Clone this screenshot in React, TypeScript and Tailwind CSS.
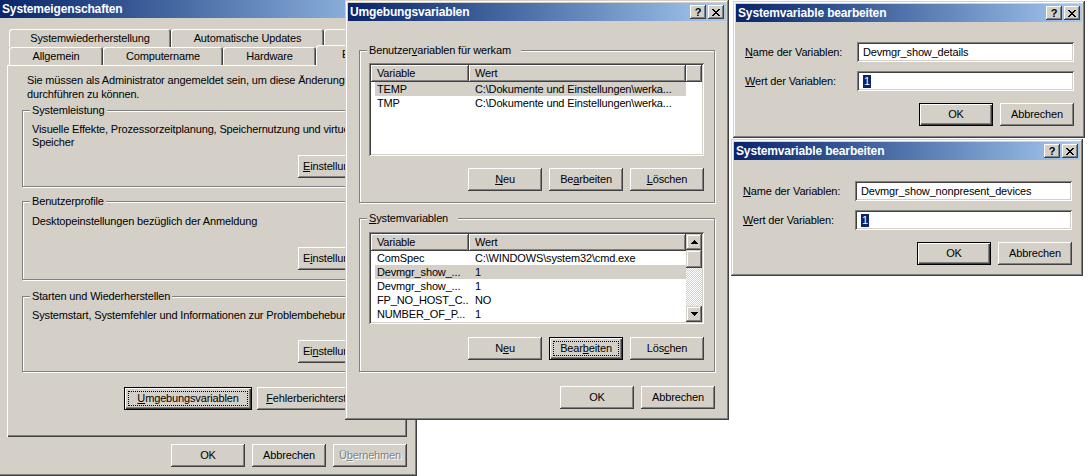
import React from 'react';

type Kids = { children?: React.ReactNode; className?: string };

function CaptionButtons() {
  return (
    <div className="flex items-center gap-[2px] pr-[2px]">
      <div className="w-[16px] h-[14px] bg-[#d4d0c8] flex items-center justify-center text-black font-bold text-[11px] leading-none shadow-[inset_-1px_-1px_#404040,inset_1px_1px_#ffffff,inset_-2px_-2px_#808080]">
        ?
      </div>
      <div className="w-[16px] h-[14px] bg-[#d4d0c8] flex items-center justify-center shadow-[inset_-1px_-1px_#404040,inset_1px_1px_#ffffff,inset_-2px_-2px_#808080]">
        <svg width="8" height="7" viewBox="0 0 8 7" shapeRendering="crispEdges">
          <path
            fill="#000"
            d="M0 0h2v1H0z M6 0h2v1H6z M1 1h2v1H1z M5 1h2v1H5z M2 2h4v1H2z M3 3h2v1H3z M2 4h4v1H2z M1 5h2v1H1z M5 5h2v1H5z M0 6h2v1H0z M6 6h2v1H6z"
          />
        </svg>
      </div>
    </div>
  );
}

function Win({ title, className = '', children }: Kids & { title: string }) {
  return (
    <div
      className={`absolute isolate flex flex-col bg-[#d4d0c8] p-[3px] shadow-[inset_-1px_-1px_#404040,inset_1px_1px_#d4d0c8,inset_-2px_-2px_#808080,inset_2px_2px_#ffffff] ${className}`}
    >
      <div className="h-[18px] shrink-0 flex items-center bg-linear-to-r from-[#0a246a] to-[#a6caf0] pl-[2px]">
        <span className="flex-1 overflow-hidden whitespace-nowrap text-white font-bold text-[12px] leading-[18px]">
          {title}
        </span>
        <CaptionButtons />
      </div>
      {children}
    </div>
  );
}

function Btn({
  children,
  className = '',
  def = false,
  focus = false,
  disabled = false,
}: Kids & { def?: boolean; focus?: boolean; disabled?: boolean }) {
  return (
    <div
      className={`relative h-[23px] shrink-0 flex items-center justify-center whitespace-nowrap overflow-hidden bg-[#d4d0c8] ${
        def
          ? 'shadow-[inset_0_0_0_1px_#000000,inset_2px_2px_#ffffff,inset_-2px_-2px_#404040,inset_-3px_-3px_#808080]'
          : 'shadow-[inset_-1px_-1px_#404040,inset_1px_1px_#ffffff,inset_-2px_-2px_#808080]'
      } ${disabled ? 'text-[#808080] [text-shadow:1px_1px_0_#ffffff]' : 'text-black'} ${className}`}
    >
      {children}
      {focus && <span className="absolute inset-[4px] border border-dotted border-black" />}
    </div>
  );
}

function Group({ label, className = '', children }: Kids & { label: React.ReactNode }) {
  return (
    <div className={`relative border border-[#808080] shadow-[inset_1px_1px_#ffffff,1px_1px_#ffffff] ${className}`}>
      <span className="absolute top-[-7px] left-[7px] px-[2px] bg-[#d4d0c8] leading-[13px] whitespace-nowrap">
        {label}
      </span>
      {children}
    </div>
  );
}

function Tab({ children, className = '' }: Kids) {
  return (
    <div
      className={`shrink-0 bg-[#d4d0c8] rounded-t-[3px] text-center leading-[18px] whitespace-nowrap overflow-hidden shadow-[inset_1px_1px_#ffffff,inset_-1px_0_#404040,inset_-2px_0_#808080] ${className}`}
    >
      {children}
    </div>
  );
}

const sunken =
  'shadow-[inset_1px_1px_#808080,inset_-1px_-1px_#ffffff,inset_2px_2px_#404040,inset_-2px_-2px_#d4d0c8]';

type Row = { name: string; value: string; sel?: boolean };

function Arrow({ down = false }: { down?: boolean }) {
  return (
    <svg width="7" height="4" viewBox="0 0 7 4" shapeRendering="crispEdges">
      <path
        fill="#000"
        d={
          down
            ? 'M0 0h7v1H0z M1 1h5v1H1z M2 2h3v1H2z M3 3h1v1H3z'
            : 'M3 0h1v1H3z M2 1h3v1H2z M1 2h5v1H1z M0 3h7v1H0z'
        }
      />
    </svg>
  );
}

const raisedBox =
  'bg-[#d4d0c8] shadow-[inset_-1px_-1px_#404040,inset_1px_1px_#d4d0c8,inset_-2px_-2px_#808080,inset_2px_2px_#ffffff]';

function ListView({ rows, scroll = false, className = '' }: { rows: Row[]; scroll?: boolean; className?: string }) {
  return (
    <div className={`flex bg-white p-[2px] ${sunken} ${className}`}>
      <div className="flex-1 flex flex-col overflow-hidden">
        <div className="flex h-[17px] shrink-0">
          <div className="w-[98px] shrink-0 pl-[6px] leading-[17px] bg-[#d4d0c8] shadow-[inset_-1px_-1px_#404040,inset_1px_1px_#ffffff,inset_-2px_-2px_#808080]">
            Variable
          </div>
          <div className="w-[217px] shrink-0 pl-[6px] leading-[17px] bg-[#d4d0c8] shadow-[inset_-1px_-1px_#404040,inset_1px_1px_#ffffff,inset_-2px_-2px_#808080]">
            Wert
          </div>
          <div className="flex-1 bg-[#d4d0c8] shadow-[inset_-1px_-1px_#404040,inset_1px_1px_#ffffff,inset_-2px_-2px_#808080]" />
        </div>
        {rows.map((r) => (
          <div
            key={r.name + r.value + (r.sel ? 's' : '')}
            className={`ml-[4px] w-[311px] h-[14px] shrink-0 flex leading-[14px] whitespace-nowrap ${r.sel ? 'bg-[#d4d0c8]' : ''}`}
          >
            <div className="w-[94px] shrink-0 pl-[2px] overflow-hidden">{r.name}</div>
            <div className="flex-1 pl-[6px] overflow-hidden">{r.value}</div>
          </div>
        ))}
      </div>
      {scroll && (
        <div className="w-[16px] shrink-0 flex flex-col">
          <div className={`h-[16px] flex items-center justify-center ${raisedBox}`}>
            <Arrow />
          </div>
          <div className={`h-[18px] ${raisedBox}`} />
          <div className="flex-1 bg-[repeating-conic-gradient(#d4d0c8_0_25%,#ffffff_0_50%)] [background-size:2px_2px]" />
          <div className={`h-[16px] flex items-center justify-center ${raisedBox}`}>
            <Arrow down />
          </div>
        </div>
      )}
    </div>
  );
}

function Edit({ children }: Kids) {
  return (
    <div className={`w-[217px] h-[20px] shrink-0 bg-white pl-[6px] flex items-center whitespace-nowrap ${sunken}`}>
      {children}
    </div>
  );
}

function EditDialog({ name, className, first }: { name: string; className: string; first: boolean }) {
  return (
    <Win title="Systemvariable bearbeiten" className={className}>
      <div className={`${first ? 'mt-[20px]' : 'mt-[21px]'} ml-[9px] flex items-center h-[20px]`}>
        <span className="w-[112px] shrink-0">
          <span className="underline">N</span>ame der Variablen:
        </span>
        <Edit>{name}</Edit>
      </div>
      <div className="mt-[9px] ml-[9px] flex items-center h-[20px]">
        <span className="w-[112px] shrink-0">
          <span className="underline">W</span>ert der Variablen:
        </span>
        <Edit>
          <span className="bg-[#0a246a] text-white px-[1px]">1</span>
        </Edit>
      </div>
      <div className="mt-[12px] ml-[183px] flex gap-[7px]">
        <Btn def className="w-[74px]">
          OK
        </Btn>
        <Btn className="w-[74px]">Abbrechen</Btn>
      </div>
    </Win>
  );
}

const userRows: Row[] = [
  { name: 'TEMP', value: 'C:\\Dokumente und Einstellungen\\werka...', sel: true },
  { name: 'TMP', value: 'C:\\Dokumente und Einstellungen\\werka...' },
];

const sysRows: Row[] = [
  { name: 'ComSpec', value: 'C:\\WINDOWS\\system32\\cmd.exe' },
  { name: 'Devmgr_show_...', value: '1', sel: true },
  { name: 'Devmgr_show_...', value: '1' },
  { name: 'FP_NO_HOST_C...', value: 'NO' },
  { name: 'NUMBER_OF_P...', value: '1' },
];

export default function App() {
  return (
    <div className="relative w-[1088px] h-[476px] overflow-hidden bg-white text-black text-[11px] leading-[13px] font-['Liberation_Sans',Arial,sans-serif] tracking-[-0.15px]">
      {/* Systemeigenschaften */}
      <Win title="Systemeigenschaften" className="left-[-3px] top-[-3px] w-[420px] h-[479px]">
        <div className="mt-[11px] ml-[9px] flex flex-col">
          <div className="flex h-[18px]">
            <Tab className="w-[162px]">Systemwiederherstellung</Tab>
            <Tab className="w-[153px]">Automatische Updates</Tab>
            <Tab className="w-[86px]">Remote</Tab>
          </div>
          <div className="flex h-[18px] items-start">
            <Tab className="w-[94px]">Allgemein</Tab>
            <Tab className="w-[120px]">Computername</Tab>
            <Tab className="w-[93px]">Hardware</Tab>
            <Tab className="relative z-10 w-[94px] h-[21px] -mt-[2px]">Erweitert</Tab>
          </div>
        </div>
        <div className="ml-[7px] w-[400px] h-[372px] shrink-0 flex flex-col shadow-[inset_1px_1px_#ffffff,inset_-1px_-1px_#404040,inset_-2px_-2px_#808080]">
          <div className="mt-[8px] ml-[20px] leading-[14px] whitespace-nowrap">
            Sie müssen als Administrator angemeldet sein, um diese Änderungen
            <br />
            durchführen zu können.
          </div>
          <Group label="Systemleistung" className="mt-[9px] ml-[15px] w-[370px] h-[77px] shrink-0 pt-[12px] pl-[9px]">
            <div className="leading-[13px] whitespace-nowrap">
              Visuelle Effekte, Prozessorzeitplanung, Speichernutzung und virtueller
              <br />
              Speicher
            </div>
            <Btn className="mt-[6px] ml-[266px] w-[74px]">
              <span>
                <span className="underline">E</span>instellungen
              </span>
            </Btn>
          </Group>
          <Group label="Benutzerprofile" className="mt-[14px] ml-[15px] w-[370px] h-[79px] shrink-0 pt-[13px] pl-[9px]">
            <div className="leading-[13px] whitespace-nowrap">Desktopeinstellungen bezüglich der Anmeldung</div>
            <Btn className="mt-[19px] ml-[266px] w-[74px]">
              <span>
                E<span className="underline">i</span>nstellungen
              </span>
            </Btn>
          </Group>
          <Group
            label="Starten und Wiederherstellen"
            className="mt-[16px] ml-[15px] w-[370px] h-[76px] shrink-0 pt-[12px] pl-[9px]"
          >
            <div className="leading-[13px] whitespace-nowrap">
              Systemstart, Systemfehler und Informationen zur Problembehebung
            </div>
            <Btn className="mt-[18px] ml-[266px] w-[74px]">
              <span>
                Ei<span className="underline">n</span>stellungen
              </span>
            </Btn>
          </Group>
          <div className="mt-[15px] ml-[117px] flex gap-[5px]">
            <Btn def focus className="w-[128px]">
              <span>
                <span className="underline">U</span>mgebungsvariablen
              </span>
            </Btn>
            <Btn className="w-[128px]">
              <span>
                <span className="underline">F</span>ehlerberichterstattung
              </span>
            </Btn>
          </div>
        </div>
        <div className="mt-[7px] ml-[171px] flex gap-[7px]">
          <Btn className="w-[74px]">OK</Btn>
          <Btn className="w-[74px]">Abbrechen</Btn>
          <Btn disabled className="w-[74px]">
            <span>
              Ü<span className="underline">b</span>ernehmen
            </span>
          </Btn>
        </div>
      </Win>

      {/* Umgebungsvariablen */}
      <Win title="Umgebungsvariablen" className="left-[345px] top-[0px] w-[384px] h-[420px]">
        <Group
          label={
            <span className="pr-[8px]">
              Benutzer<span className="underline">v</span>ariablen für werkam
            </span>
          }
          className="mt-[29px] ml-[11px] w-[356px] h-[153px] shrink-0"
        >
          <ListView rows={userRows} className="mt-[12px] ml-[9px] w-[335px] h-[93px]" />
          <div className="mt-[12px] ml-[108px] flex gap-[7px]">
            <Btn className="w-[74px]">
              <span>
                <span className="underline">N</span>eu
              </span>
            </Btn>
            <Btn className="w-[74px]">
              <span>
                Be<span className="underline">a</span>rbeiten
              </span>
            </Btn>
            <Btn className="w-[74px]">
              <span>
                <span className="underline">L</span>öschen
              </span>
            </Btn>
          </div>
        </Group>
        <Group
          label={
            <span className="pr-[8px]">
              <span className="underline">S</span>ystemvariablen
            </span>
          }
          className="mt-[15px] ml-[11px] w-[356px] h-[154px] shrink-0"
        >
          <ListView rows={sysRows} scroll className="mt-[13px] ml-[9px] w-[335px] h-[92px]" />
          <div className="mt-[13px] ml-[108px] flex gap-[7px]">
            <Btn className="w-[74px]">
              <span>
                N<span className="underline">e</span>u
              </span>
            </Btn>
            <Btn def focus className="w-[74px]">
              <span>
                Bear<span className="underline">b</span>eiten
              </span>
            </Btn>
            <Btn className="w-[74px]">
              <span>
                Lös<span className="underline">c</span>hen
              </span>
            </Btn>
          </div>
        </Group>
        <div className="mt-[14px] ml-[212px] flex gap-[7px]">
          <Btn className="w-[74px]">OK</Btn>
          <Btn className="w-[74px]">Abbrechen</Btn>
        </div>
      </Win>

      <EditDialog first name="Devmgr_show_details" className="left-[733px] top-[1px] w-[352px] h-[137px]" />
      <EditDialog
        first={false}
        name="Devmgr_show_nonpresent_devices"
        className="left-[731px] top-[139px] w-[352px] h-[137px]"
      />
    </div>
  );
}
